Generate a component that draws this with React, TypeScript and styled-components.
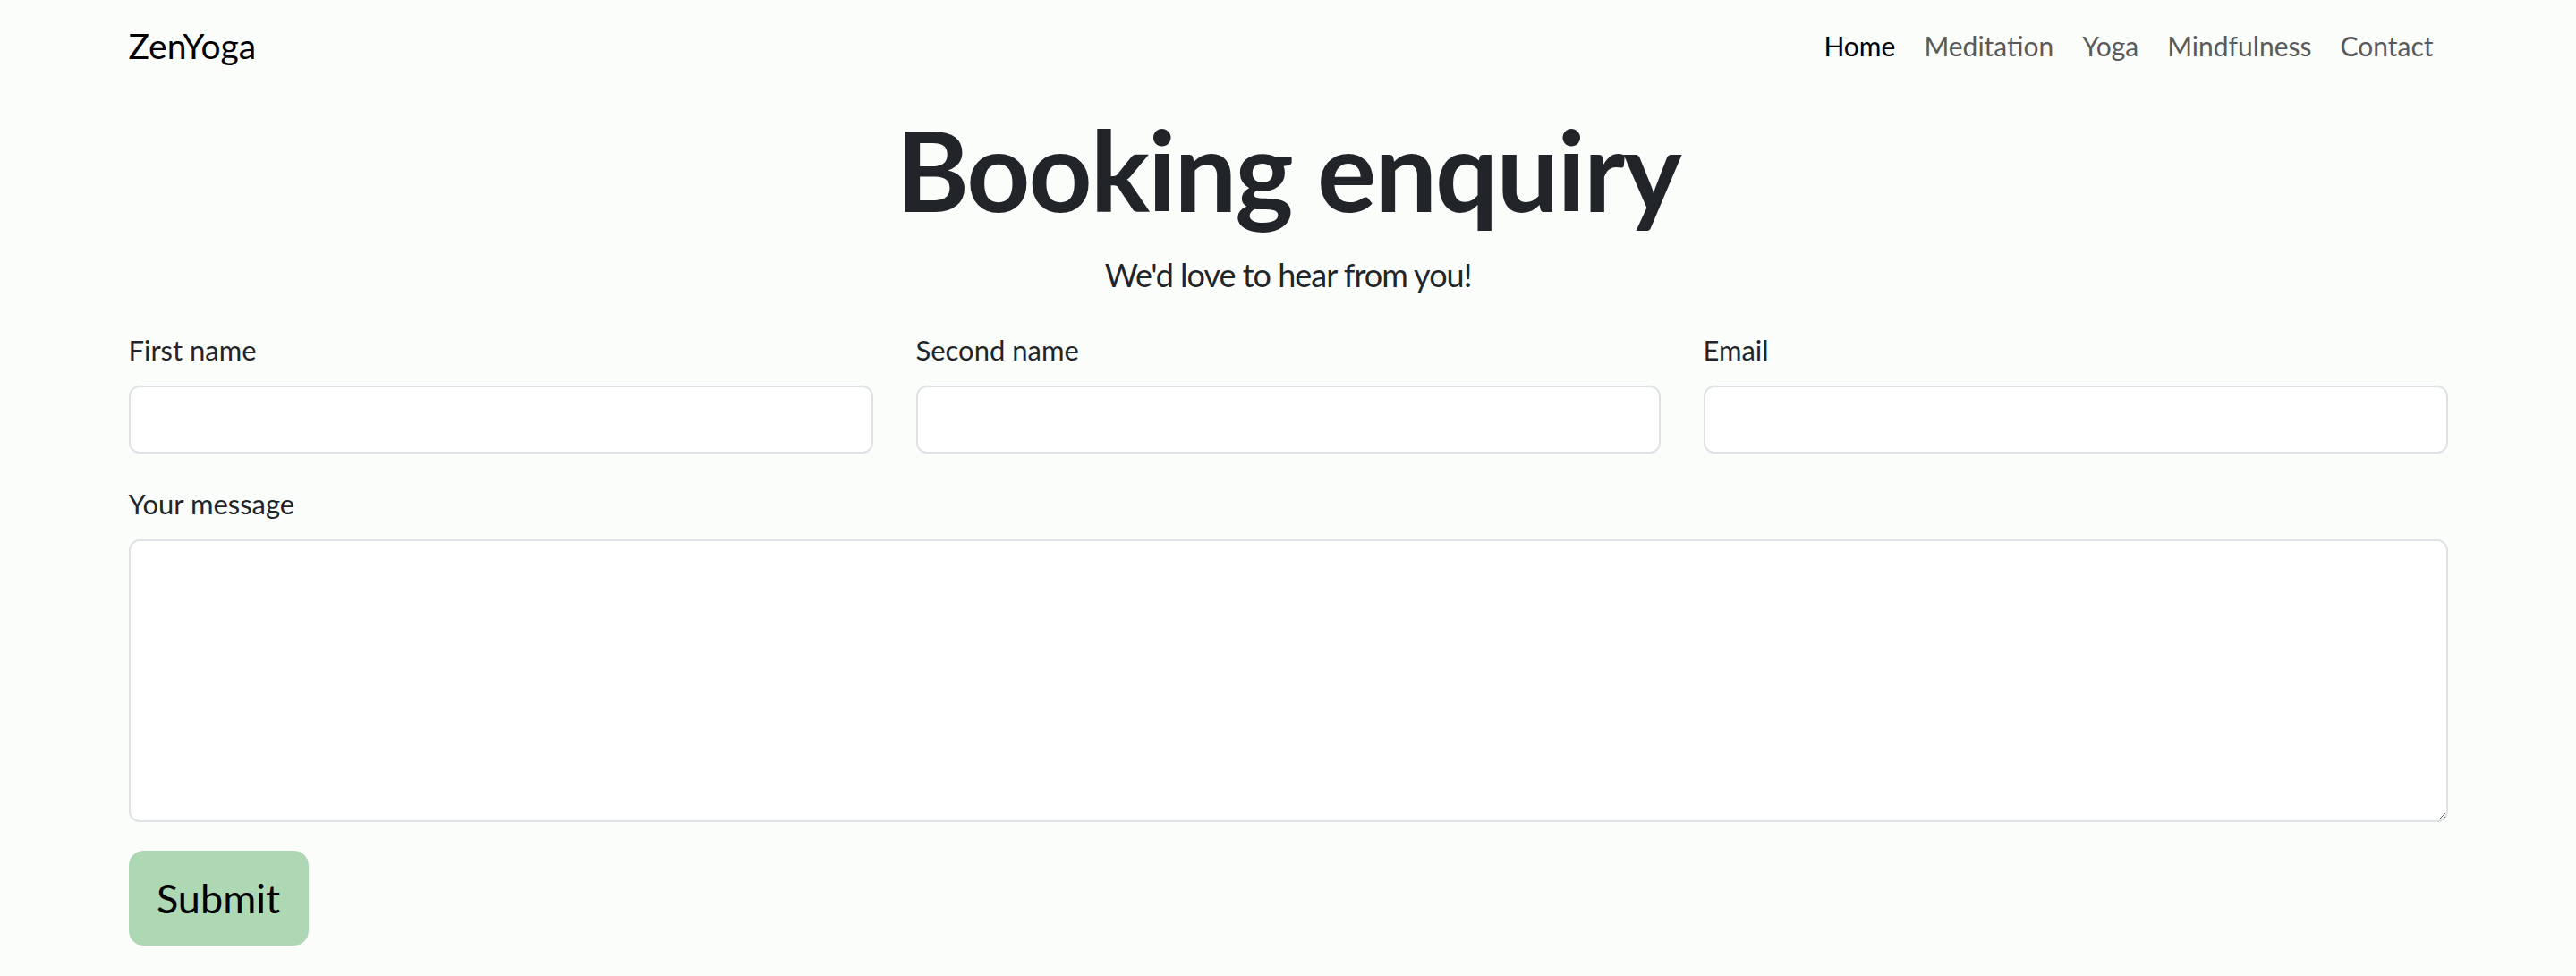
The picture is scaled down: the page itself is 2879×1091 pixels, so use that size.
import React from "react";
import styled, { createGlobalStyle } from "styled-components";

const GlobalStyle = createGlobalStyle`
  html, body {
    margin: 0;
    padding: 0;
    background: #fbfdfb;
  }
  body {
    font-family: Lato, "Noto Sans", "Liberation Sans", sans-serif;
    color: #212529;
  }
  * { box-sizing: border-box; }
`;

const Container = styled.div`
  width: 2592px;
  margin: 0 auto;
`;

const NavBar = styled.nav`
  display: flex;
  align-items: center;
  justify-content: space-between;
  padding: 16px 0;
`;

const Brand = styled.a`
  font-size: 39px;
  line-height: 70px;
  color: #000;
  text-decoration: none;
`;

const NavList = styled.ul`
  display: flex;
  list-style: none;
  margin: 0;
  padding: 0;
`;

const NavLink = styled.a<{ $active?: boolean }>`
  display: block;
  padding: 0 16px;
  font-size: 30px;
  line-height: 70px;
  color: ${(p) => (p.$active ? "#000" : "#5a5a5a")};
  text-decoration: none;
`;

const Heading = styled.h1`
  margin: 10px 0 0;
  text-align: center;
  font-size: 124px;
  letter-spacing: -2px;
  line-height: 154px;
  font-weight: 700;
  color: #212529;
`;

const Lead = styled.p`
  margin: 11px 0 0;
  text-align: center;
  font-size: 36px;
  letter-spacing: -1px;
  line-height: 60px;
  color: #212529;
`;

const Form = styled.form`
  margin-top: 30px;
  display: flex;
  flex-direction: column;
  gap: 32px;
`;

const Row = styled.div`
  display: grid;
  grid-template-columns: repeat(3, 1fr);
  column-gap: 48px;
`;

const Field = styled.div`
  display: flex;
  flex-direction: column;
`;

const Label = styled.label`
  font-size: 31px;
  line-height: 48px;
  margin-bottom: 16px;
  color: #212529;
`;

const Input = styled.input`
  display: block;
  width: 100%;
  height: 76px;
  padding: 12px 24px;
  font-size: 32px;
  font-family: inherit;
  background: #fff;
  border: 2px solid #dee2e6;
  border-radius: 12px;
  outline: none;
`;

const TextArea = styled.textarea`
  display: block;
  width: 100%;
  height: 316px;
  padding: 12px 24px;
  font-size: 32px;
  font-family: inherit;
  background: #fff;
  border: 2px solid #dee2e6;
  border-radius: 12px;
  outline: none;
  resize: vertical;
`;

const SubmitButton = styled.button`
  align-self: flex-start;
  width: 201px;
  padding: 16px 0;
  font-size: 45px;
  line-height: 72px;
  font-family: inherit;
  color: #000;
  background: #aed8b4;
  border: 1px solid #aed8b4;
  border-radius: 16px;
  cursor: pointer;
`;

const links = ["Home", "Meditation", "Yoga", "Mindfulness", "Contact"];

export default function App() {
  return (
    <>
      <GlobalStyle />
      <Container>
        <NavBar>
          <Brand href="#">ZenYoga</Brand>
          <NavList>
            {links.map((l, i) => (
              <li key={l}>
                <NavLink href="#" $active={i === 0}>
                  {l}
                </NavLink>
              </li>
            ))}
          </NavList>
        </NavBar>
        <Heading>Booking enquiry</Heading>
        <Lead>We'd love to hear from you!</Lead>
        <Form onSubmit={(e) => e.preventDefault()}>
          <Row>
            <Field>
              <Label htmlFor="first">First name</Label>
              <Input id="first" type="text" />
            </Field>
            <Field>
              <Label htmlFor="second">Second name</Label>
              <Input id="second" type="text" />
            </Field>
            <Field>
              <Label htmlFor="email">Email</Label>
              <Input id="email" type="email" />
            </Field>
          </Row>
          <Field>
            <Label htmlFor="msg">Your message</Label>
            <TextArea id="msg" />
          </Field>
          <SubmitButton type="submit">Submit</SubmitButton>
        </Form>
      </Container>
    </>
  );
}
